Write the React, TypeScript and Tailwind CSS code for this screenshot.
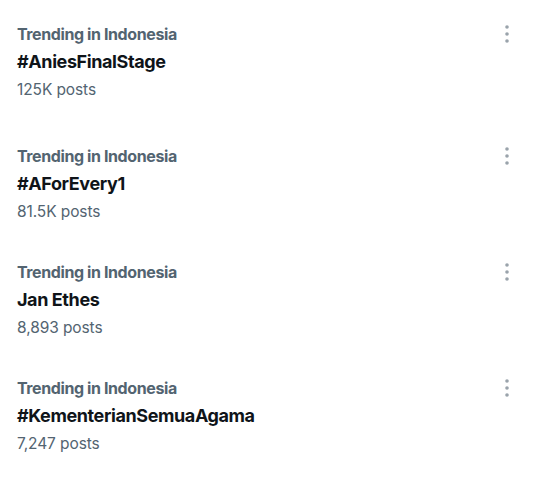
import React from 'react'

const trends = [
  { title: '#AniesFinalStage', posts: '125K posts' },
  { title: '#AForEvery1', posts: '81.5K posts' },
  { title: 'Jan Ethes', posts: '8,893 posts' },
  { title: '#KementerianSemuaAgama', posts: '7,247 posts' },
]

const MoreIcon: React.FC = () => (
  <svg width="12" height="20" viewBox="0 0 12 20" fill="#9aa3ab">
    <circle cx="6" cy="3" r="1.8" />
    <circle cx="6" cy="10" r="1.8" />
    <circle cx="6" cy="17" r="1.8" />
  </svg>
)

export default function App() {
  return (
    <div
      className="w-[535px] h-[479px] bg-white pt-5 overflow-hidden"
      style={{ fontFamily: 'Inter, "Noto Sans", sans-serif' }}
    >
      {trends.map((t, i) => (
        <div
          key={t.title}
          className={`flex items-start justify-between pl-[17px] pr-[22px] ${i === 0 ? 'mb-[38px]' : 'mb-8'}`}
        >
          <div className="flex flex-col">
            <span className="text-[16px] leading-[28px] font-bold text-[#536471] tracking-[-0.4px]">
              Trending in Indonesia
            </span>
            <span className="text-[18px] leading-[28px] font-bold text-[#0f1419] tracking-[-0.4px]">
              {t.title}
            </span>
            <span className="text-[15.5px] leading-[28px] text-[#536471] tracking-[-0.1px]">{t.posts}</span>
          </div>
          <div className="pt-[4px]">
            <MoreIcon />
          </div>
        </div>
      ))}
    </div>
  )
}
